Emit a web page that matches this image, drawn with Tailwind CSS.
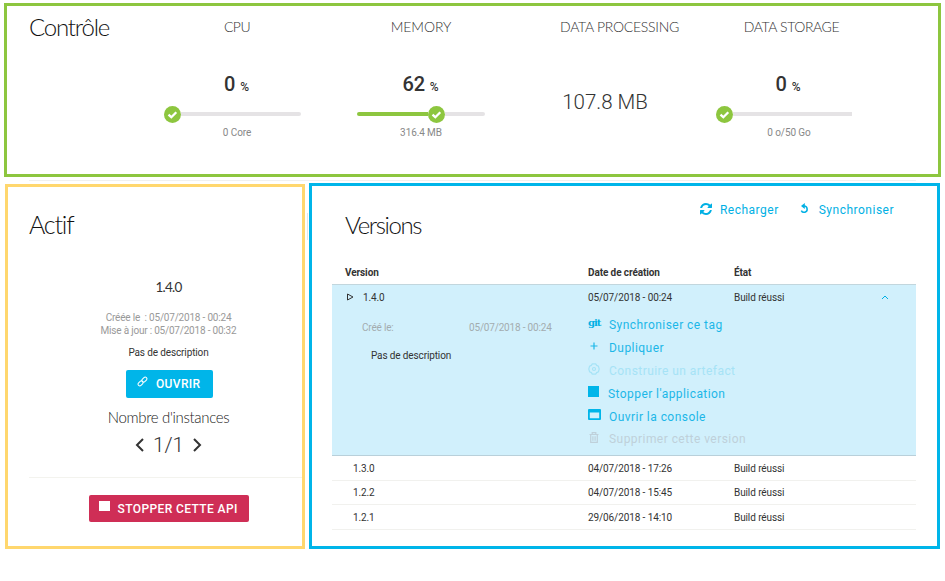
<!DOCTYPE html>
<html lang="fr">
<head>
<meta charset="utf-8">
<title>Contrôle</title>
<script src="https://cdn.jsdelivr.net/npm/@tailwindcss/browser@4"></script>
</head>
<body class="w-[945px] h-[581px] overflow-hidden bg-white text-[#333] font-['Roboto',sans-serif] text-[10px] tracking-[-0.100px] leading-none whitespace-nowrap pt-[3px] pl-1">

<!-- Resource usage -->
<section class="w-[937px] h-[174px] border-3 border-[#8dc63f] pl-[22px] flex">
  <h1 class="w-[116px] h-[42px] leading-[42px] font-['Lato',sans-serif] font-light text-[24px] tracking-[-1.200px] text-[#111]">Contrôle</h1>
  <div class="grid grid-cols-4 w-[736px] text-center">
    <div class="flex flex-col items-center">
      <h2 class="h-[42px] leading-[42px] font-['Lato',sans-serif] font-light text-[14px] tracking-[-0.500px]">CPU</h2>
      <p class="mt-[22px] h-[28px] leading-[28px] text-[20px] font-medium pr-px">0 <span class="text-[12px]">%</span></p>
      <div class="flex items-center mt-[7px] w-[137px] ml-[-9px] h-[18px]">
        <svg class="w-[17px] h-[17px]" viewBox="0 0 17 17"><circle cx="8.500" cy="8.500" r="8.500" fill="#8dc63f"/><path d="M4.500 8.700l2.800 2.500 5-5" fill="none" stroke="#fff" stroke-width="2.300"/></svg>
        <div class="flex-1 h-1 bg-[#e5e3e5] rounded-r-full"></div>
      </div>
      <p class="mt-[2px] h-[16px] leading-[16px] text-[#888]">0 Core</p>
    </div>
    <div class="flex flex-col items-center">
      <h2 class="h-[42px] leading-[42px] font-['Lato',sans-serif] font-light text-[14px] tracking-[-0.100px]">MEMORY</h2>
      <p class="mt-[22px] h-[28px] leading-[28px] text-[20px] font-medium pr-px">62 <span class="text-[12px]">%</span></p>
      <div class="flex items-center mt-[7px] w-[128px] h-[18px]">
        <div class="w-[70.500px] h-1 bg-[#8dc63f] rounded-l-full"></div>
        <svg class="w-[17px] h-[17px]" viewBox="0 0 17 17"><circle cx="8.500" cy="8.500" r="8.500" fill="#8dc63f"/><path d="M4.500 8.700l2.800 2.500 5-5" fill="none" stroke="#fff" stroke-width="2.300"/></svg>
        <div class="flex-1 h-1 bg-[#e5e3e5] rounded-r-full"></div>
      </div>
      <p class="mt-[2px] h-[16px] leading-[16px] text-[#888]">316.4 MB</p>
    </div>
    <div class="flex flex-col items-center">
      <h2 class="pl-[29px] h-[42px] leading-[42px] font-['Lato',sans-serif] font-light text-[14px] tracking-[-0.270px]">DATA PROCESSING</h2>
      <p class="mt-[40px] h-[28px] leading-[28px] text-[20.500px] tracking-normal font-light">107.8 MB</p>
    </div>
    <div class="flex flex-col items-center">
      <h2 class="pl-[5px] h-[42px] leading-[42px] font-['Lato',sans-serif] font-light text-[14px] tracking-[-0.400px]">DATA STORAGE</h2>
      <p class="mt-[22px] h-[28px] leading-[28px] text-[20px] font-medium pr-[2px]">0 <span class="text-[12px]">%</span></p>
      <div class="flex items-center mt-[7px] w-[136px] ml-[-10px] h-[18px]">
        <svg class="w-[17px] h-[17px]" viewBox="0 0 17 17"><circle cx="8.500" cy="8.500" r="8.500" fill="#8dc63f"/><path d="M4.500 8.700l2.800 2.500 5-5" fill="none" stroke="#fff" stroke-width="2.300"/></svg>
        <div class="flex-1 h-1 bg-[#e5e3e5]"></div>
      </div>
      <p class="mt-[2px] h-[16px] leading-[16px] text-[#888]">0 o/50 Go</p>
    </div>
  </div>
</section>
<div class="w-[887px] h-px mt-[3px] ml-[25px] bg-[#f0f0f0]"></div>

<main class="flex items-start pl-px mt-[2px]">
  <!-- Active version -->
  <section class="w-[300px] h-[365px] mt-px border-3 border-[#ffd76e] flex flex-col items-center">
    <h1 class="self-start ml-[21px] mt-[15px] h-[44px] leading-[44px] font-['Lato',sans-serif] font-light text-[25px] tracking-[-1.200px] text-[#111]">Actif</h1>
    <p class="mt-[31px] ml-[27px] h-[20px] leading-[20px] font-['Lato',sans-serif] text-[13.500px] tracking-[-0.800px]">1.4.0</p>
    <p class="ml-[27px] mt-[14px] h-[13px] leading-[13px] text-[#999] tracking-[-0.200px]">Créée le &nbsp;: 05/07/2018 - 00:24</p>
    <p class="ml-[27px] h-[13px] leading-[13px] text-[#999] tracking-[-0.200px]">Mise à jour : 05/07/2018 - 00:32</p>
    <p class="ml-[27px] mt-[9px] h-[14px] leading-[14px] tracking-[-0.130px]">Pas de description</p>
    <button class="ml-[29px] mt-[10px] w-[87px] h-[28px] rounded-[2px] bg-[#00b5e9] text-white flex items-center pl-[11px] text-[12px] font-medium tracking-[0.350px]">
      <svg class="w-[11px] h-[11px] mb-[5px] mr-[8px]" viewBox="0 0 11 11" fill="none" stroke="#fff" stroke-width="1"><rect x="-2.800" y="-1.700" width="5.600" height="3.400" rx="1.700" transform="translate(3.600 7.400) rotate(-45)"/><rect x="-2.800" y="-1.700" width="5.600" height="3.400" rx="1.700" transform="translate(7.400 3.600) rotate(-45)"/></svg>OUVRIR</button>
    <p class="ml-[27px] mt-[9px] h-[20px] leading-[20px] font-['Lato',sans-serif] font-light text-[15px] tracking-[-0.320px] text-[#222]">Nombre d'instances</p>
    <div class="ml-[27px] mt-[6px] h-[24px] flex items-center gap-[9px] text-[20.500px] tracking-normal font-light">
      <svg class="w-[9px] h-[14px]" viewBox="0 0 9 14" fill="none" stroke="#333" stroke-width="2"><path d="M8 1L2 7l6 6"/></svg>
      <span>1/1</span>
      <svg class="w-[9px] h-[14px]" viewBox="0 0 9 14" fill="none" stroke="#333" stroke-width="2"><path d="M1 1l6 6-6 6"/></svg>
    </div>
    <div class="self-stretch ml-[21px] mt-[20px] h-px bg-[#f3f3ee] shrink-0"></div>
    <button class="ml-[27px] mt-[17px] w-[160px] h-[27px] rounded-[2px] bg-[#cf2e56] text-white flex items-center pl-[10px] text-[12px] font-medium tracking-[0.400px]"><span class="w-[11px] h-[10px] bg-white mr-[8px] mb-[5px]"></span>STOPPER CETTE API</button>
  </section>
  <div class="w-px h-[27px] bg-[#e5e5e5] mt-[30px] ml-[2px] mr-px"></div>

  <!-- Version list -->
  <section class="w-[631px] h-[366px] border-3 border-[#00b5e9] pl-[20px] pr-[21px]">
    <div class="flex h-[77px] pl-[13px]">
      <h1 class="mt-[17px] h-[44px] leading-[44px] font-['Lato',sans-serif] font-light text-[24px] tracking-[-1.400px] text-[#111]">Versions</h1>
      <div class="ml-auto mr-[22px] mt-[14px] h-[20px] flex items-center text-[12px] tracking-[0.500px] text-[#00b0e4]">
        <svg class="w-[12px] h-[12px] mb-[3px] mr-[8px]" viewBox="0 0 1536 1536" fill="currentColor"><path d="M1511 928q0 5-1 7-64 268-268 434.500t-478 166.500q-146 0-282.500-55t-243.500-157l-129 129q-19 19-45 19t-45-19-19-45v-448q0-26 19-45t45-19h448q26 0 45 19t19 45-19 45l-137 137q71 66 161 102t187 36q134 0 250-65t186-179q11-17 53-117 8-23 30-23h192q13 0 22.500 9.500t9.500 22.500zM1536 128v448q0 26-19 45t-45 19h-448q-26 0-45-19t-19-45 19-45l138-138q-148-137-349-137-134 0-250 65t-186 179q-11 17-53 117-8 23-30 23h-199q-13 0-22.500-9.500t-9.500-22.500v-7q65-268 270-434.500t480-166.500q146 0 284 55.500t245 156.500l130-129q19-19 45-19t45 19 19 45z"/></svg>
        <span class="mr-[21px]">Recharger</span>
        <svg class="w-[9px] h-[11px] mb-[3px] mr-[10px]" viewBox="0 0 9 11" fill="none" stroke="currentColor" stroke-width="1.500"><path d="M4.200 3.100A3.100 3.100 0 1 1 1.300 7.600"/><path d="M4.800 0v6L1 3z" fill="currentColor" stroke="none"/></svg>
        <span>Synchroniser</span>
      </div>
    </div>
    <div class="w-[584px]">
      <div class="grid grid-cols-[243px_146px_1fr] pl-[13px] h-[21px] leading-[19px] font-bold tracking-[-0.100px]">
        <span>Version</span><span>Date de création</span><span>État</span>
      </div>
      <div class="h-[172px] bg-[#d1f0fc] border-y border-t-[#c2d6dd] border-b-[#b9d0da]">
        <div class="grid grid-cols-[243px_146px_147px_1fr] items-center pl-[13px] h-[25px]">
          <span class="flex items-center"><svg class="w-[8px] h-[8px] ml-[1px] mr-[9px] mb-px" viewBox="0 0 8 8" fill="none" stroke="#333"><path d="M1.500 1l5.500 3-5.500 3z"/></svg>1.4.0</span>
          <span>05/07/2018 - 00:24</span><span>Build réussi</span>
          <svg class="w-[8px] h-[5px] mb-px" viewBox="0 0 8 5" fill="none" stroke="#00b0e4"><path d="M1 4l3-3 3 3"/></svg>
        </div>
        <div class="grid grid-cols-[256px_1fr]">
          <div class="pl-[30px] pt-[11px]">
            <p class="flex text-[#a3acaf] h-[14px] leading-[14px] tracking-[-0.180px]"><span class="w-[107px]">Créé le:</span>05/07/2018 - 00:24</p>
            <p class="mt-[14px] pl-[9px] h-[14px] leading-[14px] tracking-[-0.130px]">Pas de description</p>
          </div>
          <ul class="pt-[4px] text-[12px] tracking-[0.450px] text-[#1cb7e8]">
            <li class="h-[22.800px] flex items-center"><span class="w-[21px] pb-[5px] font-['DejaVu_Serif',serif] font-bold text-[10px] tracking-[-1px] text-[#00b0e4]">git</span>Synchroniser ce tag</li>
            <li class="h-[22.800px] flex items-center"><svg class="w-[8px] h-[8px] ml-[2px] mr-[11px] mb-[4px]" viewBox="0 0 8 8" stroke="currentColor" stroke-width="1.200"><path d="M4 .5v7M.5 4h7"/></svg>Dupliquer</li>
            <li class="h-[22.800px] flex items-center text-[#a6e3f6]"><svg class="w-[12px] h-[12px] mr-[9px] mb-[4px]" viewBox="0 0 12 12" fill="none" stroke="currentColor" stroke-width="1.200"><path d="M4.300.9h3.400l1 1.500 1.700.7.8 2.900-.8 2.900-1.700.7-1 1.500H4.300l-1-1.500-1.700-.7L.8 6l.8-2.900 1.700-.7z"/><circle cx="6" cy="6" r="1.500"/></svg>Construire un artefact</li>
            <li class="h-[22.800px] flex items-center"><span class="w-[11px] h-[11px] bg-[#00b5e9] mr-[9px] mb-[4px]"></span><span class="tracking-[0.430px]">Stopper l'application</span></li>
            <li class="h-[22.800px] flex items-center"><svg class="w-[13px] h-[11px] mr-[8px] mb-[4px]" viewBox="0 0 13 11"><path fill="#00b5e9" fill-rule="evenodd" d="M1 0h11q1 0 1 1v9q0 1-1 1H1q-1 0-1-1V1q0-1 1-1zM1.800 3.400v5.800h9.400V3.400z"/></svg>Ouvrir la console</li>
            <li class="h-[22.800px] flex items-center text-[#bfd0da]"><svg class="w-[10px] h-[11px] ml-px mr-[10px] mb-[4px]" viewBox="0 0 10 11" fill="none" stroke="currentColor" stroke-width="1.200"><path d="M.5 2.500h9M3.200 2.200V.7h3.600v1.500M1.700 2.500v7.900h6.600V2.500M3.900 4.300v4.500M6.100 4.300v4.500"/></svg>Supprimer cette version</li>
          </ul>
        </div>
      </div>
      <div class="grid grid-cols-[235px_146px_1fr] items-center pl-[21px] h-[25px] pt-px border-b border-[#f1f1ee]"><span>1.3.0</span><span>04/07/2018 - 17:26</span><span>Build réussi</span></div>
      <div class="grid grid-cols-[235px_146px_1fr] items-center pl-[21px] h-[24px] border-b border-[#f1f1ee]"><span>1.2.2</span><span>04/07/2018 - 15:45</span><span>Build réussi</span></div>
      <div class="grid grid-cols-[235px_146px_1fr] items-center pl-[21px] h-[25px] pt-px border-b border-[#f1f1ee]"><span>1.2.1</span><span>29/06/2018 - 14:10</span><span>Build réussi</span></div>
    </div>
  </section>
</main>
</body>
</html>
